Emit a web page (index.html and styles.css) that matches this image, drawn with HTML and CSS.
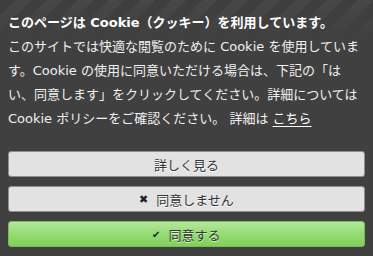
FILE: index.html
```html
<!DOCTYPE html>
<html lang="ja">
<head>
<meta charset="utf-8">
<link rel="stylesheet" href="styles.css">
</head>
<body>
<div class="banner">
  <p class="msg"><strong>このページは Cookie（クッキー）を利用しています。</strong><br>このサイトでは快適な閲覧のために Cookie を使用しています。Cookie の使用に同意いただける場合は、下記の「はい、同意します」をクリックしてください。詳細については Cookie ポリシーをご確認ください。 詳細は <a class="link" href="#">こちら</a></p>
  <div class="buttons">
    <button class="btn">詳しく見る</button>
    <button class="btn"><span class="icon">&#x2716;</span>同意しません</button>
    <button class="btn btn-ok"><span class="icon ok">&#x2714;</span>同意する</button>
  </div>
</div>
</body>
</html>
```
FILE: styles.css
```css
html, body {
  margin: 0;
  padding: 0;
  height: 100%;
}
body {
  background-color: #404040;
  background-image:
    linear-gradient(to bottom, rgba(64,64,64,0) 0px, #404040 40px),
    repeating-linear-gradient(135deg, #3e3e3e 0px, #3e3e3e 11px, #474747 11px, #474747 22px);
  background-repeat: no-repeat;
  font-family: "DejaVu Sans", "Noto Sans CJK JP", sans-serif;
}
.banner {
  padding: 11px 8px 8px 8px;
}
.msg {
  margin: 0;
  color: #f0f0f0;
  font-size: 13px;
  line-height: 24px;
}
.msg strong {
  color: #ffffff;
  font-weight: bold;
}
.link {
  color: #ffffff;
  text-decoration: underline;
  text-underline-offset: 3px;
}
.buttons {
  margin-top: 20px;
  display: flex;
  flex-direction: column;
  gap: 9px;
}
.btn {
  height: 26px;
  width: 100%;
  margin: 0;
  padding: 0;
  border: 1px solid #8f8f8f;
  border-radius: 3px;
  background: #e2e2e2;
  color: #333333;
  font-family: "Liberation Sans", "Noto Sans CJK JP", sans-serif;
  font-size: 13px;
  text-shadow: 0 1px 0 #ffffff;
  display: flex;
  align-items: center;
  justify-content: center;
}
.btn-ok {
  border-color: #78bc55;
  background: linear-gradient(to bottom, #b2e89a 0%, #95db74 50%, #82d05b 100%);
  text-shadow: 0 1px 0 #d8f5c8;
}
.icon {
  font-size: 11px;
  margin-right: 8px;
  color: #222222;
  text-shadow: none;
}
.icon.ok {
  font-size: 10px;
}
```
